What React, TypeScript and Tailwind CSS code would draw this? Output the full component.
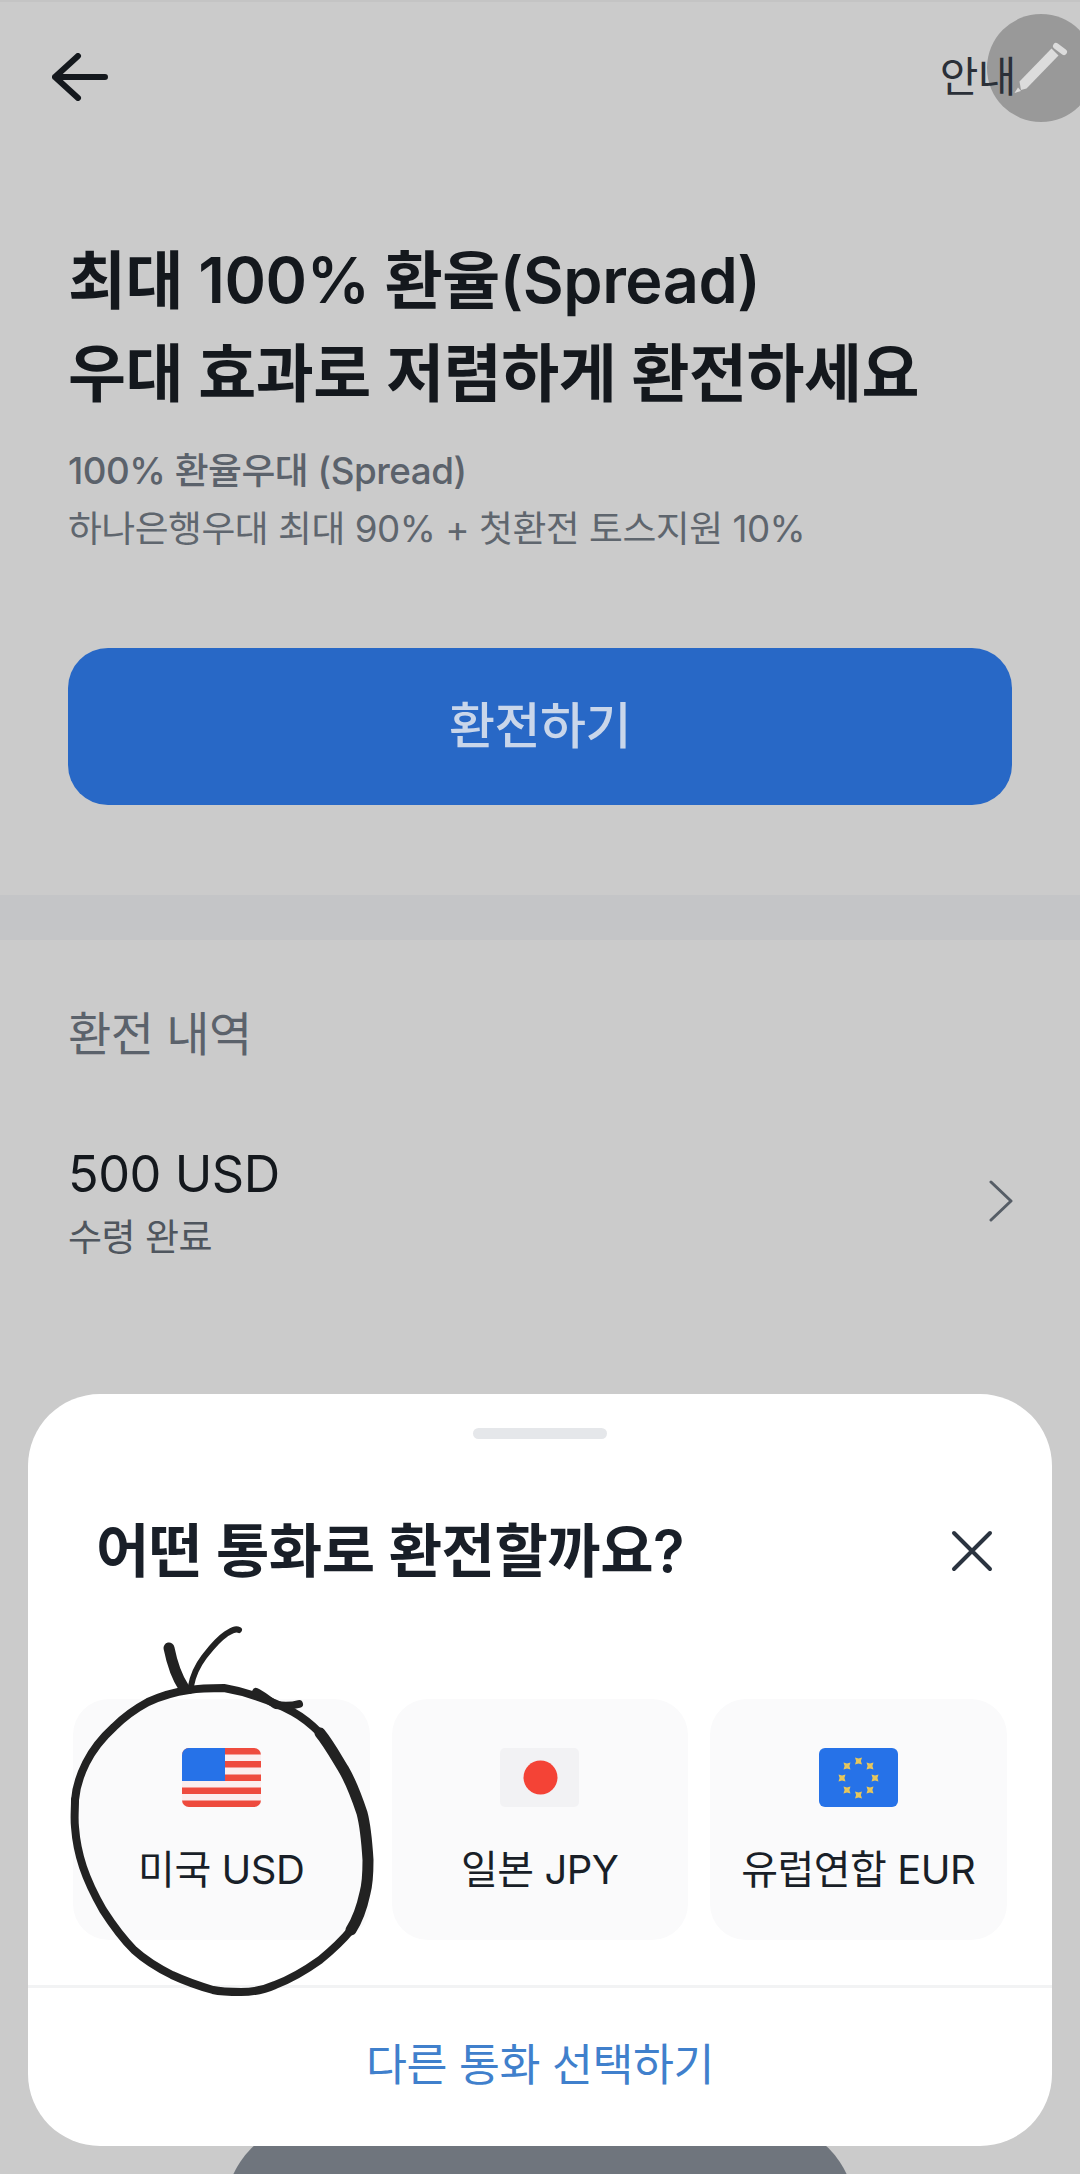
const stars: [number, number][] = [
  [39.5, 13],
  [51, 18],
  [56, 30],
  [51, 42],
  [39.5, 47],
  [28, 42],
  [23, 30],
  [28, 18],
];

const UsFlag = () => (
  <svg width="79" height="59" viewBox="0 0 79 59" className="block">
    <defs>
      <clipPath id="us">
        <rect width="79" height="59" rx="7" />
      </clipPath>
    </defs>
    <g clipPath="url(#us)">
      <rect width="79" height="59" fill="#fbeeee" />
      <rect y="0" width="79" height="6.5" fill="#ee4b3e" />
      <rect y="13" width="79" height="6.5" fill="#ee4b3e" />
      <rect y="26.5" width="79" height="6.5" fill="#ee4b3e" />
      <rect y="39.5" width="79" height="6.5" fill="#ee4b3e" />
      <rect y="52.5" width="79" height="6.5" fill="#ee4b3e" />
      <rect width="43" height="33" fill="#2672e8" />
    </g>
  </svg>
);

const JpFlag = () => (
  <svg width="79" height="59" viewBox="0 0 79 59" className="block">
    <rect width="79" height="59" rx="5" fill="#f2f2f4" />
    <circle cx="40.5" cy="29.5" r="17" fill="#f44336" />
  </svg>
);

const EuFlag = () => (
  <svg width="79" height="59" viewBox="0 0 79 59" className="block">
    <rect width="79" height="59" rx="6" fill="#2672e8" />
    {stars.map(([x, y]) => (
      <path
        key={`${x}-${y}`}
        d={`M${x - 3.5} ${y - 3.5}L${x} ${y - 2.4}L${x + 3.5} ${y - 3.5}L${x + 2.4} ${y}L${x + 3.5} ${y + 3.5}L${x} ${y + 2.4}L${x - 3.5} ${y + 3.5}L${x - 2.4} ${y}Z`}
        fill="#e6c65c"
      />
    ))}
  </svg>
);

const currencies = [
  { label: "미국 USD", flag: <UsFlag /> },
  { label: "일본 JPY", flag: <JpFlag /> },
  { label: "유럽연합 EUR", flag: <EuFlag /> },
];

export default function App() {
  return (
    <div className="relative h-[2174px] w-[1080px] overflow-hidden border-t-2 border-[#c4c4c4] bg-[#cbcbcb] font-['Inter','Noto_Sans_CJK_KR',sans-serif] tracking-[-0.03em]">
      <header className="flex h-[150px] items-center justify-between pl-[52px] pr-[64px]">
        <svg width="56" height="48" viewBox="0 0 56 48" fill="none" stroke="#14181d" strokeWidth="6" strokeLinecap="round" strokeLinejoin="round">
          <path d="M3 24H53M26 3L3 24L26 45" />
        </svg>
        <span className="relative z-10 text-[42px] leading-none text-[#2b3038]">안내</span>
      </header>

      <section className="px-[68px] pt-[82px]">
        <h1 className="text-[63px] leading-[93px] font-semibold text-[#14181d]">
          최대 100% 환율(Spread)
          <br />
          우대 효과로 저렴하게 환전하세요
        </h1>
        <p className="mt-[22px] text-[36.8px] leading-[58px] font-medium text-[#5b626b]">100% 환율우대 (Spread)</p>
        <p className="text-[36.8px] leading-[58px] text-[#5f666e]">하나은행우대 최대 90% + 첫환전 토스지원 10%</p>
        <button className="mt-[90px] flex h-[157px] w-[944px] items-center justify-center rounded-[40px] bg-[#2868c6] text-[50px] font-medium text-[#c9d6ea]">
          환전하기
        </button>
      </section>

      <div className="mt-[90px] h-[45px] bg-[#c4c5c7]" />

      <section className="px-[68px] pt-[62px]">
        <h2 className="text-[47px] leading-[64px] text-[#5b626b]">환전 내역</h2>
        <div className="mt-[76px] flex items-center justify-between">
          <div>
            <p className="text-[50.5px] leading-[64px] text-[#14181d]">500 USD</p>
            <p className="mt-[7px] text-[37px] leading-[50px] text-[#4f565e]">수령 완료</p>
          </div>
          <svg width="24" height="44" viewBox="0 0 24 44" fill="none" stroke="#565d66" strokeWidth="3" strokeLinecap="round" strokeLinejoin="round" className="mb-[4px] mr-[-1px]">
            <path d="M2 3L22 22L2 41" />
          </svg>
        </div>
      </section>

      {/* floating edit button from the screen recorder */}
      <div className="absolute left-[987px] top-[12px] h-[108px] w-[108px] rounded-full bg-[#999999]">
        <svg width="108" height="108" viewBox="0 0 108 108" fill="#dcdcdc">
          <path d="M32.5 67.5L64.5 34.5L71.5 41.5L39.5 74.5L34 76Z" />
          <path d="M27.5 79L31 73.5L34 77Z" />
          <path d="M69 32L77 38" stroke="#dcdcdc" strokeWidth="6" strokeLinecap="round" />
        </svg>
      </div>

      {/* button underneath the sheet */}
      <div className="absolute left-[225px] top-[2120px] h-[200px] w-[630px] rounded-[90px] bg-[#6f757d]" />

      <div className="absolute left-[28px] top-[1392px] h-[752px] w-[1024px] rounded-[72px] bg-white">
        <div className="mx-auto mt-[34px] h-[11px] w-[134px] rounded-full bg-[#e5e7ea]" />
        <div className="flex items-center justify-between pl-[68px] pr-[58px] pt-[72px]">
          <h3 className="text-[58px] leading-[80px] font-semibold text-[#191f28]">어떤 통화로 환전할까요?</h3>
          <svg width="44" height="44" viewBox="0 0 44 44" fill="none" stroke="#2b3440" strokeWidth="4" strokeLinecap="round">
            <path d="M4 4L40 40M40 4L4 40" />
          </svg>
        </div>
        <div className="mt-[108px] flex gap-[22px] pl-[45px]">
          {currencies.map((c) => (
            <div key={c.label} className="flex h-[241px] w-[296.5px] flex-col items-center rounded-[36px] bg-[#fafafb] pt-[49px]">
              {c.flag}
              <span className="mt-[39px] text-[40px] leading-[48px] text-[#191f28]">{c.label}</span>
            </div>
          ))}
        </div>
        <div className="mt-[45px] h-[3px] bg-[#f2f3f4]" />
        <p className="pt-[52px] text-center text-[44.5px] leading-[50px] text-[#4080cc]">다른 통화 선택하기</p>
      </div>

      {/* hand-drawn marker around USD */}
      <svg className="absolute left-[60px] top-[1618px]" width="320" height="380" viewBox="60 1620 320 380" fill="none" stroke="#222222" strokeLinecap="round" strokeLinejoin="round">
        <path strokeWidth="8" d="M189 1690C201 1688 212 1688 224 1688C236 1690 247 1693 258 1697C270 1701 282 1706 293 1712C304 1718 312 1725 320 1733C329 1744 336 1757 344 1770C352 1784 357 1798 362 1813M75 1800C75 1810 74 1818 75 1827C76 1841 79 1855 83 1867C88 1882 95 1896 103 1910C112 1924 122 1938 134 1950C145 1960 158 1968 172 1975C185 1981 199 1986 213 1990C222 1992 232 1992 241 1992C253 1992 264 1990 275 1985C291 1979 306 1970 320 1960C331 1951 342 1941 351 1930" />
        <path strokeWidth="11" d="M320 1733C329 1744 336 1757 344 1770C352 1784 357 1798 362 1813C366 1828 367 1844 368 1860C368 1871 368 1882 365 1893C362 1907 358 1919 351 1930" />
        <path strokeWidth="8" d="M75 1800C76 1787 80 1775 86 1763C93 1749 103 1737 114 1727C124 1717 135 1709 148 1702C161 1696 175 1692 189 1690" />
        <path strokeWidth="11" d="M169 1648C172 1663 176 1676 184 1688" />
        <path strokeWidth="6" d="M191 1686C193 1675 198 1665 204 1657C211 1648 217 1640 226 1634C231 1631 235 1628 239 1630" />
        <path strokeWidth="8" d="M256 1692C263 1695 269 1701 276 1705C284 1706 292 1706 299 1704" />
      </svg>
    </div>
  );
}
